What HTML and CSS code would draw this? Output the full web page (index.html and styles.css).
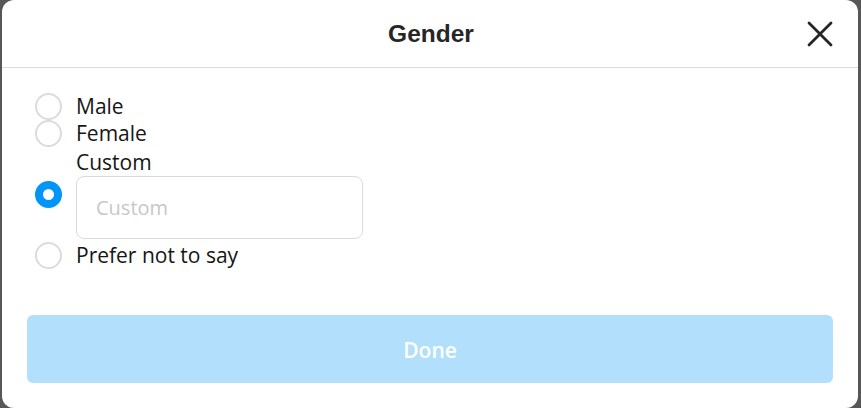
FILE: index.html
```html
<!DOCTYPE html>
<html>
<head>
<meta charset="utf-8">
<link rel="stylesheet" href="styles.css">
</head>
<body>
<div class="modal">
  <div class="header">
    <h1 class="title">Gender</h1>
    <button class="close" aria-label="Close">
      <svg width="26" height="26" viewBox="0 0 26 26"><path d="M2 2 L24 24 M24 2 L2 24" stroke="#262626" stroke-width="2.8" stroke-linecap="round" fill="none"/></svg>
    </button>
  </div>
  <div class="options">
    <div class="option"><span class="radio"></span><span class="label">Male</span></div>
    <div class="option"><span class="radio"></span><span class="label">Female</span></div>
    <div class="option custom"><span class="radio checked"></span>
      <div class="custom-col">
        <span class="label">Custom</span>
        <div class="input">Custom</div>
      </div>
    </div>
    <div class="option"><span class="radio"></span><span class="label">Prefer not to say</span></div>
  </div>
  <div class="footer">
    <button class="done">Done</button>
  </div>
</div>
</body>
</html>
```
FILE: styles.css
```css
html, body {
  margin: 0;
  padding: 0;
  background: #575757;
  height: 100%;
  overflow: hidden;
}
.modal {
  margin-left: 2px;
  width: 856px;
  height: 408px;
  background: #fff;
  border-radius: 12px;
  display: flex;
  flex-direction: column;
  box-sizing: border-box;
}
.header {
  height: 68px;
  box-sizing: border-box;
  border-bottom: 1px solid #dbdbdb;
  display: flex;
  align-items: center;
  justify-content: center;
  position: relative;
}
.title {
  margin: 0;
  font-family: "Liberation Sans", Arial, sans-serif;
  font-weight: bold;
  font-size: 24.5px;
  color: #262626;
  padding-left: 2px;
}
.close {
  position: absolute;
  right: 25px;
  top: 21px;
  border: 0;
  background: none;
  padding: 0;
  width: 26px;
  height: 26px;
}
.close svg { display: block; }
.options {
  padding: 25px 0 0 33px;
  display: flex;
  flex-direction: column;
  font-family: "Open Sans", "Noto Sans", sans-serif;
  font-size: 21px;
  font-weight: 500;
  color: #161616;
}
.option {
  display: flex;
  align-items: center;
  gap: 14px;
  min-height: 27px;
}
.radio {
  width: 27px;
  height: 27px;
  box-sizing: border-box;
  border: 2px solid #dbdbdb;
  border-radius: 50%;
  flex: none;
}
.radio.checked {
  border: 8px solid #0095f6;
}
.label {
  line-height: 27px;
}
.custom {
  padding-top: 2px;
  padding-bottom: 3px;
}
.custom-col {
  display: flex;
  flex-direction: column;
}
.input {
  width: 287px;
  height: 63px;
  box-sizing: border-box;
  border: 1px solid #dbdbdb;
  border-radius: 8px;
  padding-left: 19px;
  display: flex;
  align-items: center;
  color: #c7c7c7;
  font-size: 20px;
  font-weight: 400;
}
.footer {
  margin-top: auto;
  padding: 0 25px 25px;
}
.done {
  width: 100%;
  height: 68px;
  border: 0;
  border-radius: 6px;
  background: #b2dffc;
  color: #fff;
  font-family: "Open Sans", "Noto Sans", sans-serif;
  font-weight: 600;
  font-size: 21px;
  padding-top: 2px;
}
```
